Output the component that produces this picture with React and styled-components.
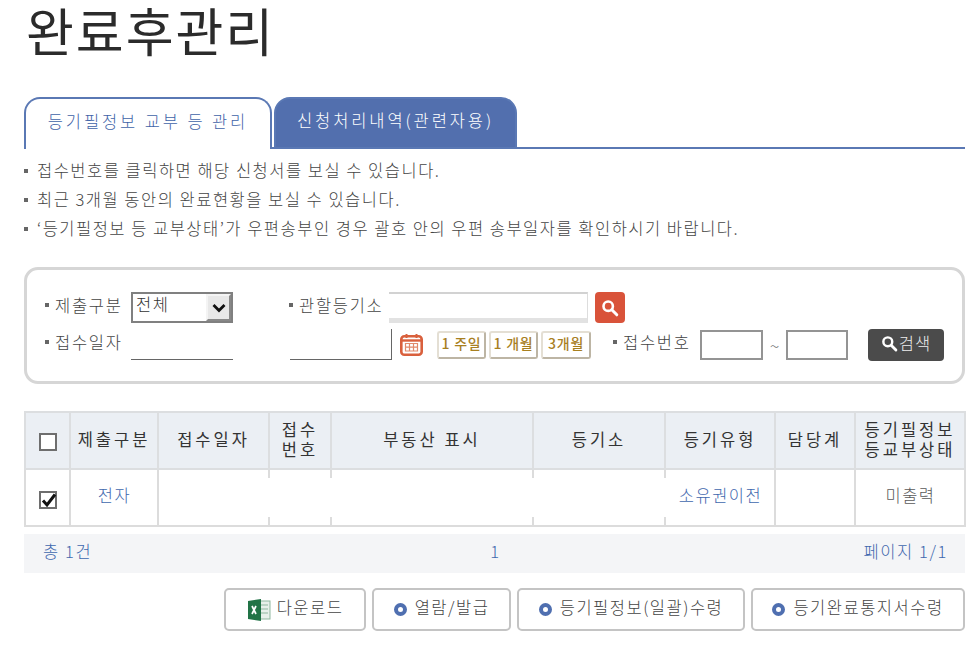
import React from "react";
import styled, { createGlobalStyle } from "styled-components";

const Global = createGlobalStyle`
  html, body { margin: 0; padding: 0; background: #fff; }
  body { font-family: "Noto Sans CJK KR", "Liberation Sans", sans-serif; color: #444; }
  * { box-sizing: border-box; }
`;
const Page = styled.div`
  width: 977px; height: 650px; padding: 0 12px 0 24px; overflow: hidden;
`;
const Title = styled.h1`
  margin: 0 0 0 2px; height: 97px; font-size: 52px; line-height: 59px; font-weight: 400;
  color: #2b2b2b; letter-spacing: 2px;
`;
const Tabs = styled.div`
  display: flex; height: 52px; gap: 2px; border-bottom: 2px solid #5a78b4;
`;
const Tab = styled.div`
  height: 52px; width: ${p => p.$w}px; border-radius: 16px 16px 0 0;
  display: flex; align-items: center; justify-content: center; padding-bottom: 7px;
  font-size: 16.5px; letter-spacing: 2.9px; font-weight: 300;
  background: ${p => (p.$active ? "#fff" : "#526fae")};
  color: ${p => (p.$active ? "#3f63a8" : "#fff")};
  border: 2px solid #5a78b4;
  border-bottom: ${p => (p.$active ? "none" : "2px solid #5a78b4")};
`;
const Notices = styled.ul`
  list-style: none; margin: 7px 0 0; padding: 0; height: 111px;
`;
const Notice = styled.li`
  height: 29px; line-height: 29px; font-size: 16.5px; letter-spacing: 1.5px; font-weight: 300; color: #444; white-space: nowrap;
  display: flex; align-items: center; gap: 9px;
`;
const Dot = styled.span`
  display: inline-block; width: 4px; height: 4px; background: ${p => p.$c || "#666"}; flex: none;
`;
const SearchBox = styled.div`
  height: 117px; border: 3px solid #d6d6d6; border-radius: 14px;
  padding: 22px 0 0 18px; display: flex; flex-direction: column; gap: 6px;
`;
const Row = styled.div`
  display: flex; align-items: center; height: 31px;
`;
const Label = styled.label`
  display: flex; align-items: center; gap: 6px; width: ${p => p.$w}px; margin-left: ${p => p.$ml || 0}px; padding-bottom: 5px; flex: none;
  font-size: 16.5px; letter-spacing: 1.7px; font-weight: 300; color: #444; white-space: nowrap;
`;
const SelectBox = styled.div`
  width: 102px; height: 31px; border: 2px solid #808080; display: flex; font-size: 16.5px; font-weight: 300; letter-spacing: 1.6px;
  color: #333; line-height: 20px; padding-left: 3px; flex: none;
`;
const SelectValue = styled.span`
  flex: 1;
`;
const SelectArrow = styled.span`
  width: 25px; background: #e8e8e8; border: 2px solid; border-color: #f4f4f4 #888 #888 #f4f4f4;
  display: flex; align-items: center; justify-content: center;
`;
const OfficeInput = styled.div`
  width: 199px; height: 31px; flex: none; border-top: 2px solid #d2d2d2; border-bottom: 5px solid #e2e2e2;
  border-right: 1px solid #ddd; background: #fff;
`;
const RedButton = styled.button`
  width: 30px; height: 31px; margin-left: 7px; padding: 0; border: none; border-radius: 4px; background: #d9533a;
  display: flex; align-items: center; justify-content: center;
`;
const DateInput = styled.div`
  width: 102px; height: 31px; flex: none; margin-left: ${p => p.$ml || 0}px; border-bottom: 1px solid #666;
  border-right: ${p => (p.$right ? "1px solid #666" : "none")};
`;
const CalIcon = styled.span`
  margin-left: 8px; width: 23px; height: 23px; display: flex; flex: none;
`;
const RangeGroup = styled.div`
  display: flex; gap: 3px; margin-left: 14px;
`;
const RangeBtn = styled.button`
  height: 28px; width: ${p => p.$w}px; padding: 0 0 3px; border: 2px solid; border-color: #e4dfd4 #bdb5a4 #bdb5a4 #e4dfd4; border-radius: 3px;
  background: #fff; color: #a8801f; font: 500 14px "Noto Sans CJK KR", sans-serif; letter-spacing: .8px; white-space: nowrap;
`;
const NumInput = styled.div`
  width: ${p => p.$w}px; height: 30px; border: 2px solid #949494; flex: none;
`;
const Tilde = styled.span`
  width: 23px; text-align: center; color: #777; font-size: 18px; font-weight: 300; flex: none;
`;
const DarkButton = styled.button`
  width: 76px; height: 32px; margin-left: 20px; padding: 0 0 3px; border: none; border-radius: 4px; background: #4b4b4b; color: #eee;
  display: flex; align-items: center; justify-content: center; gap: 1px; font: 300 16.5px "Noto Sans CJK KR", sans-serif; letter-spacing: 1px;
`;
const Table = styled.table`
  margin-top: 27px; width: 940px; table-layout: fixed; border-collapse: collapse; border: 2px solid #dcdcdc;
`;
const Th = styled.th`
  height: 57px; padding: 0 0 3px; border: 2px solid #dcdee0; background: #ebeff4; font-size: 16.5px; font-weight: 400; color: #333;
  line-height: 20px; text-align: center; letter-spacing: 3px; white-space: nowrap;
`;
const CheckTh = styled(Th)`
  padding: 0;
`;
const Td = styled.td`
  position: relative; height: 57px; padding: 0 0 5px 1px; border: 2px solid #dcdcdc; text-align: center; font-size: 16.5px; font-weight: 300; letter-spacing: 1.5px;
  color: ${p => (p.$link ? "#3f68ae" : "#5a5a5a")};
  &::after {
    content: ${p => (p.$gap ? '""' : "none")};
    position: absolute; right: -2px; top: 8px; bottom: 8px; width: 3px; background: #fff;
  }
`;
const CheckTd = styled(Td)`
  padding: 0;
`;
const Check = styled.span`
  display: inline-flex; width: 18px; height: 18px; vertical-align: middle; border: 2px solid #6e6e6e; background: #fff; position: relative;
`;
const Pager = styled.div`
  margin-top: 7px; height: 39px; background: #f4f5f7; display: grid; grid-template-columns: 1fr auto 1fr; align-items: center;
  padding: 0 17px 6px 19px; font-size: 16.5px; font-weight: 300; letter-spacing: 1.6px; color: #3f68ae;
`;
const PagerEnd = styled.span`
  text-align: right;
`;
const Actions = styled.div`
  margin-top: 15px; display: flex; justify-content: flex-end; gap: 6px;
`;
const ActionBtn = styled.button`
  width: ${p => p.$w}px; height: 43px; padding: 0 0 5px; border: 2px solid #c4c4c4; border-radius: 5px; background: #fff;
  display: flex; align-items: center; justify-content: center; gap: 8px; font: 300 16.5px "Noto Sans CJK KR", sans-serif; letter-spacing: 1.5px; color: #444;
`;
const Ring = styled.span`
  width: 13px; height: 13px; border-radius: 50%; border: 4px solid #4f6fb0; flex: none; margin-top: 4px;
`;
const ExcelWrap = styled.span`
  display: flex; margin: 5px -2px 0 0;
`;

const Magnifier = ({ size = 18, stroke = "#fff" }) => (
  <svg width={size} height={size} viewBox="0 0 18 18" fill="none">
    <circle cx="7.2" cy="7.2" r="4.7" stroke={stroke} strokeWidth="2.6" />
    <path d="M10.8 10.8 15.8 15.8" stroke={stroke} strokeWidth="3" strokeLinecap="round" />
  </svg>
);
const Chevron = () => (
  <svg width="14" height="10" viewBox="0 0 14 10" fill="none">
    <path d="M1.5 2 7 7.5 12.5 2" stroke="#111" strokeWidth="2.8" />
  </svg>
);
const Calendar = () => (
  <svg width="23" height="23" viewBox="0 0 23 23" fill="none">
    <rect x="1.3" y="3.3" width="20.4" height="18.4" rx="3" stroke="#d9603d" strokeWidth="2.6" />
    <path d="M1 7.5h21" stroke="#d9603d" strokeWidth="2.4" />
    <path d="M6.5 1v4M16.5 1v4" stroke="#d9603d" strokeWidth="2" />
    <path d="M5.5 10.5h12v7.5h-12zM5.5 14.2h12M9.5 10.5V18M13.5 10.5V18" stroke="#e08a6c" strokeWidth="1.2" />
  </svg>
);
const Excel = () => (
  <svg width="24" height="24" viewBox="0 0 24 24" fill="none">
    <rect x="10" y="3" width="13" height="18" fill="#e7f0ea" stroke="#8fb79f" />
    <path d="M14 7h7M14 11h7M14 15h7" stroke="#8fb79f" />
    <path d="M1 3 14 1v22L1 21z" fill="#217346" />
    <path d="M5 8l4 8M9 8l-4 8" stroke="#fff" strokeWidth="1.7" />
  </svg>
);
const Tick = () => (
  <svg width="18" height="18" viewBox="0 0 18 18" fill="none" style={{ position: "absolute", left: -1, top: -2 }}>
    <path d="M3 9.5 7 14 15 3.5" stroke="#111" strokeWidth="3" />
  </svg>
);

const cols = [45, 88, 111, 62, 202, 132, 110, 80, 110];
const notices = [
  "접수번호를 클릭하면 해당 신청서를 보실 수 있습니다.",
  "최근 3개월 동안의 완료현황을 보실 수 있습니다.",
  "‘등기필정보 등 교부상태’가 우편송부인 경우 괄호 안의 우편 송부일자를 확인하시기 바랍니다.",
];

export default function App() {
  return (
    <Page>
      <Global />
      <Title>완료후관리</Title>
      <Tabs>
        <Tab $active $w={248}>등기필정보 교부 등 관리</Tab>
        <Tab $w={243}>신청처리내역(관련자용)</Tab>
      </Tabs>
      <Notices>
        {notices.map(n => (
          <Notice key={n}><Dot />{n}</Notice>
        ))}
      </Notices>
      <SearchBox>
        <Row>
          <Label $w={86}><Dot />제출구분</Label>
          <SelectBox><SelectValue>전체</SelectValue><SelectArrow><Chevron /></SelectArrow></SelectBox>
          <Label $w={100} $ml={56}><Dot />관할등기소</Label>
          <OfficeInput />
          <RedButton aria-label="검색"><Magnifier /></RedButton>
        </Row>
        <Row>
          <Label $w={86}><Dot />접수일자</Label>
          <DateInput />
          <DateInput $ml={57} $right />
          <CalIcon><Calendar /></CalIcon>
          <RangeGroup>
            <RangeBtn $w={49}>1 주일</RangeBtn>
            <RangeBtn $w={49}>1 개월</RangeBtn>
            <RangeBtn $w={50}>3개월</RangeBtn>
          </RangeGroup>
          <Label $w={87} $ml={22}><Dot />접수번호</Label>
          <NumInput $w={63} />
          <Tilde>~</Tilde>
          <NumInput $w={62} />
          <DarkButton><Magnifier size={17} />검색</DarkButton>
        </Row>
      </SearchBox>
      <Table>
        <colgroup>
          {cols.map((c, i) => <col key={i} width={c} />)}
        </colgroup>
        <thead>
          <tr>
            <CheckTh><Check /></CheckTh>
            <Th>제출구분</Th>
            <Th>접수일자</Th>
            <Th>접수<br />번호</Th>
            <Th>부동산 표시</Th>
            <Th>등기소</Th>
            <Th>등기유형</Th>
            <Th>담당계</Th>
            <Th>등기필정보<br />등교부상태</Th>
          </tr>
        </thead>
        <tbody>
          <tr>
            <CheckTd><Check><Tick /></Check></CheckTd>
            <Td $link>전자</Td>
            <Td $gap />
            <Td $gap />
            <Td $gap />
            <Td $gap />
            <Td $link>소유권이전</Td>
            <Td />
            <Td>미출력</Td>
          </tr>
        </tbody>
      </Table>
      <Pager>
        <span>총 1건</span>
        <span>1</span>
        <PagerEnd>페이지 1/1</PagerEnd>
      </Pager>
      <Actions>
        <ActionBtn $w={142}><ExcelWrap><Excel /></ExcelWrap>다운로드</ActionBtn>
        <ActionBtn $w={139}><Ring />열람/발급</ActionBtn>
        <ActionBtn $w={228}><Ring />등기필정보(일괄)수령</ActionBtn>
        <ActionBtn $w={214}><Ring />등기완료통지서수령</ActionBtn>
      </Actions>
    </Page>
  );
}
